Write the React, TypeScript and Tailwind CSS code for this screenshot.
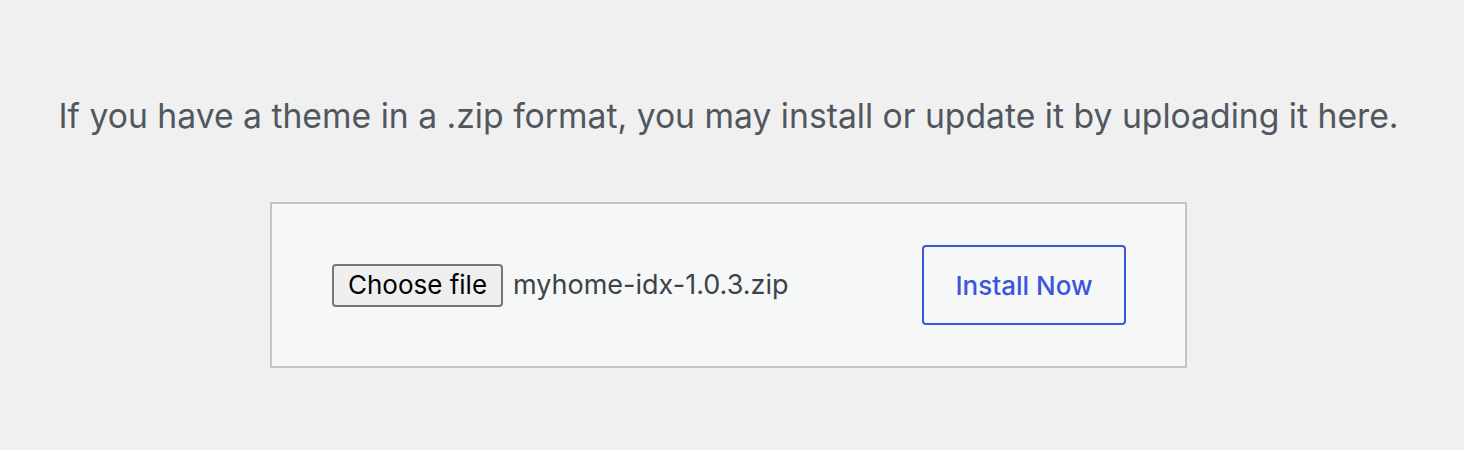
export default function App() {
  return (
    <div className="min-h-screen w-full bg-[#f0f0f1] flex flex-col items-center pt-[93px] pr-[7px]" style={{ fontFamily: 'Inter, "Noto Sans", sans-serif' }}>
      <p className="text-[33.7px] leading-[46px] text-[#50575e] text-center whitespace-nowrap">
        If you have a theme in a .zip format, you may install or update it by uploading it here.
      </p>

      <div className="mt-[63px] w-[917px] h-[166px] border-2 border-[#c3c4c7] bg-[#f6f7f7] flex items-center pl-[60px]">
        <div className="w-[590px] flex items-center">
          <button className="h-[43px] w-[171px] bg-[#efefef] border-2 border-[#767676] rounded-[4px] text-[26px] text-black leading-none">
            Choose file
          </button>
          <span className="ml-[10px] text-[27px] text-[#3c434a]">myhome-idx-1.0.3.zip</span>
        </div>
        <button className="w-[204px] h-[80px] border-2 border-[#3b56dc] rounded-[4px] text-[26px] font-medium text-[#3b56dc]">
          Install Now
        </button>
      </div>
    </div>
  );
}
